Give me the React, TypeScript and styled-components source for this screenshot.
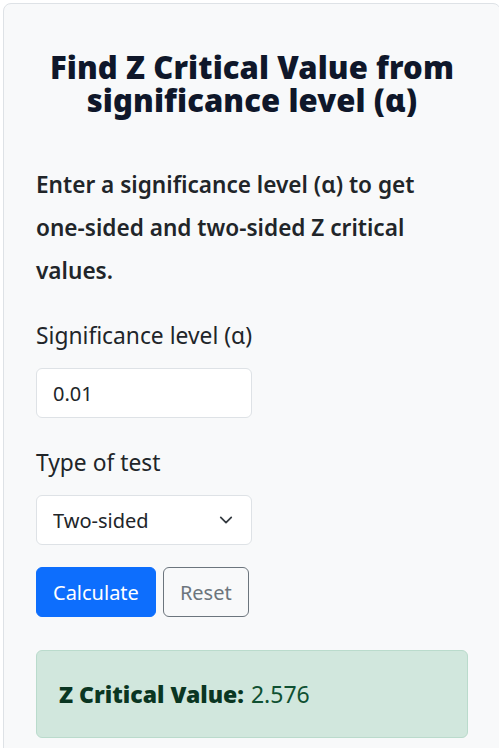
import React, { useState } from "react";
import styled, { createGlobalStyle } from "styled-components";

const Global = createGlobalStyle`
  html, body { margin: 0; padding: 0; background: #ffffff; overflow: hidden; }
  body { font-family: "Noto Sans", "Open Sans", sans-serif; color: #212529; }
  * { box-sizing: border-box; }
`;

const Card = styled.div`
  margin: 3px 0 0 3px;
  width: 498px;
  min-height: 760px;
  background: #f8f9fa;
  border: 1px solid #dee2e6;
  border-radius: 8px;
  padding: 32px;
  display: flex;
  flex-direction: column;
`;

const Title = styled.h1`
  margin: 15px 0 0;
  font-size: 31px;
  line-height: 33px;
  font-weight: 900;
  text-align: center;
  color: #0f172a;
  letter-spacing: 0.1px;
`;

const Intro = styled.p`
  margin: 46px 0 0;
  font-size: 22.6px;
  line-height: 43px;
  font-weight: 600;
  color: #212529;
`;

const Field = styled.div<{ $top: number }>`
  display: flex;
  flex-direction: column;
  align-items: flex-start;
  margin-top: ${(p) => p.$top}px;
`;

const Label = styled.label`
  font-size: 22.8px;
  line-height: 34px;
  color: #212529;
  margin-bottom: 15px;
`;

const Input = styled.input`
  width: 216px;
  height: 50px;
  padding: 0 16px;
  font: inherit;
  font-size: 20px;
  color: #212529;
  background: #fff;
  border: 1px solid #dee2e6;
  border-radius: 6px;
  outline: none;
`;

const SelectWrap = styled.div`
  position: relative;
  width: 216px;
  height: 50px;
`;

const Select = styled.select`
  appearance: none;
  width: 100%;
  height: 100%;
  padding: 0 40px 0 16px;
  font: inherit;
  font-size: 20px;
  color: #212529;
  background: #fff;
  border: 1px solid #dee2e6;
  border-radius: 6px;
  outline: none;
`;

const Chevron = styled.svg`
  position: absolute;
  right: 19px;
  top: 18px;
  pointer-events: none;
`;

const Buttons = styled.div`
  display: flex;
  gap: 7px;
  margin-top: 22px;
`;

const Button = styled.button<{ $primary?: boolean }>`
  height: 50px;
  padding: 0 16px;
  font: inherit;
  font-size: 20px;
  border-radius: 6px;
  cursor: pointer;
  background: ${(p) => (p.$primary ? "#0d6efd" : "transparent")};
  color: ${(p) => (p.$primary ? "#ffffff" : "#6c757d")};
  border: 1px solid ${(p) => (p.$primary ? "#0d6efd" : "#6c757d")};
`;

const Alert = styled.div`
  margin-top: 33px;
  height: 88px;
  display: flex;
  align-items: center;
  padding: 0 22px;
  background: #d1e7dd;
  border: 1px solid #badbcc;
  border-radius: 6px;
  color: #0f5132;
  font-size: 23px;
`;

const Strong = styled.strong`
  font-weight: 900;
  color: #0a3622;
  margin-right: 7px;
`;

export default function App() {
  const [alpha, setAlpha] = useState("0.01");
  const [type, setType] = useState("two");
  return (
    <>
      <Global />
      <Card>
        <Title>
          Find Z Critical Value from
          <br />
          significance level (α)
        </Title>
        <Intro>
          Enter a significance level (α) to get one-sided and two-sided Z critical values.
        </Intro>
        <Field $top={27}>
          <Label>Significance level (α)</Label>
          <Input value={alpha} onChange={(e) => setAlpha(e.target.value)} />
        </Field>
        <Field $top={28}>
          <Label>Type of test</Label>
          <SelectWrap>
            <Select value={type} onChange={(e) => setType(e.target.value)}>
              <option value="two">Two-sided</option>
              <option value="one">One-sided</option>
            </Select>
            <Chevron width="14" height="14" viewBox="0 0 16 16">
              <path d="M2 5l6 6 6-6" fill="none" stroke="#343a40" strokeWidth="2" strokeLinecap="round" strokeLinejoin="round" />
            </Chevron>
          </SelectWrap>
        </Field>
        <Buttons>
          <Button $primary>Calculate</Button>
          <Button>Reset</Button>
        </Buttons>
        <Alert>
          <Strong>Z Critical Value:</Strong> 2.576
        </Alert>
      </Card>
    </>
  );
}
